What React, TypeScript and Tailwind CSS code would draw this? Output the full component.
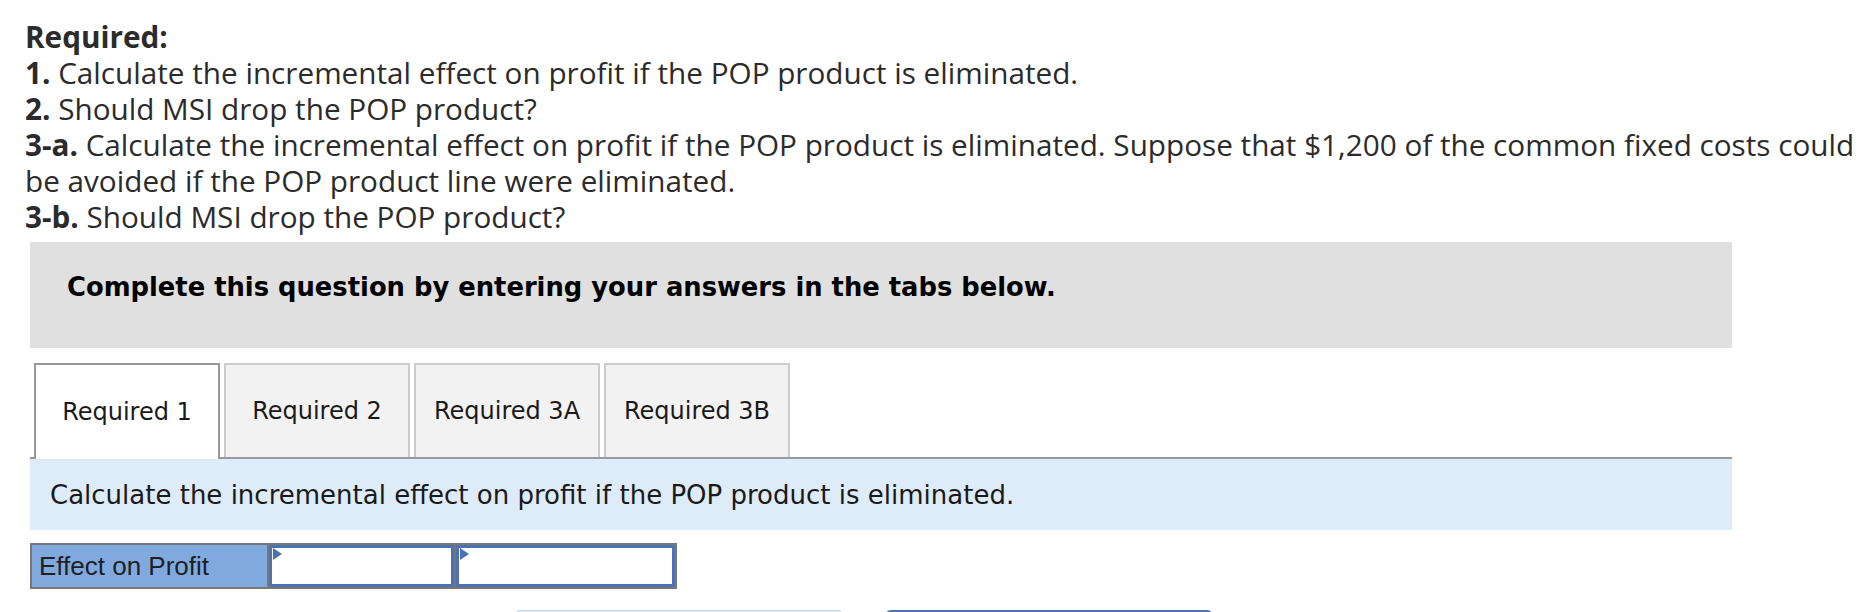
import React from "react";

const Flag = () => (
  <svg className="absolute left-[1px] top-[0px]" width="10" height="12" viewBox="0 0 10 12">
    <polygon points="0,0 9,6 0,12" fill="#4a72b5" />
  </svg>
);

export default function App() {
  const tabs = ["Required 1", "Required 2", "Required 3A", "Required 3B"];
  return (
    <div className="w-[1864px] h-[612px] overflow-hidden bg-white">
      <div
        className="pl-[25px] pt-[19px] text-[29.7px] leading-[36px] text-[#2b2b2b] whitespace-nowrap"
        style={{ fontFamily: "'Open Sans', 'Noto Sans', sans-serif" }}
      >
        <div className="font-bold">Required:</div>
        <div><span className="font-bold">1.</span> Calculate the incremental effect on profit if the POP product is eliminated.</div>
        <div><span className="font-bold">2.</span> Should MSI drop the POP product?</div>
        <div><span className="font-bold">3-a.</span> Calculate the incremental effect on profit if the POP product is eliminated. Suppose that $1,200 of the common fixed costs could</div>
        <div>be avoided if the POP product line were eliminated.</div>
        <div><span className="font-bold">3-b.</span> Should MSI drop the POP product?</div>
      </div>

      <div className="ml-[30px] w-[1702px] mt-[7px]" style={{ fontFamily: "'DejaVu Sans', Verdana, sans-serif" }}>
        <div className="h-[106px] bg-[#e0e0e0] pl-[37px] pt-[30px]">
          <div className="text-[25.8px] leading-[30px] font-bold text-black">
            Complete this question by entering your answers in the tabs below.
          </div>
        </div>

        <div className="mt-[15px] flex items-end gap-[4px] pl-[4px] border-b-2 border-[#999999] h-[96px]">
          {tabs.map((t, i) =>
            i === 0 ? (
              <div
                key={t}
                className="w-[186px] h-[96px] mb-[-2px] bg-white border-2 border-b-0 border-[#999999] flex items-center justify-center text-[24px] text-[#1a1a1a]"
              >
                {t}
              </div>
            ) : (
              <div
                key={t}
                className="w-[186px] h-[94px] bg-[#f2f2f2] border-2 border-b-0 border-[#cccccc] flex items-center justify-center text-[24px] text-[#1a1a1a]"
              >
                {t}
              </div>
            )
          )}
        </div>

        <div className="h-[71px] bg-[#deebf8] pl-[20px] flex items-center text-[26px] text-[#1a1a1a] pt-[2px]">
          Calculate the incremental effect on profit if the POP product is eliminated.
        </div>

        <div className="mt-[13px] flex h-[46px] w-[647px] border-2 border-[#777777]">
          <div
            className="w-[237px] h-full bg-[#80a9df] border-r-2 border-[#777777] pl-[7px] flex items-center text-[26px] text-[#1f1f1f]"
            style={{ fontFamily: "'Liberation Sans', Arial, sans-serif" }}
          >
            Effect on Profit
          </div>
          <div className="w-[187px] h-full border-r-2 border-[#777777]">
            <div className="relative w-full h-full bg-white border-[3px] border-[#4a72b5]">
              <Flag />
            </div>
          </div>
          <div className="flex-1 h-full">
            <div className="relative w-full h-full bg-white border-[3px] border-[#4a72b5]">
              <Flag />
            </div>
          </div>
        </div>

        <div className="mt-[21px] flex gap-[41px] pl-[484px]">
          <div className="w-[330px] h-[40px] rounded-[6px] bg-[#dfe8f2] border border-[#c9d6e6]" />
          <div className="w-[328px] h-[40px] rounded-[6px] bg-[#4a74b4]" />
        </div>
      </div>
    </div>
  );
}
